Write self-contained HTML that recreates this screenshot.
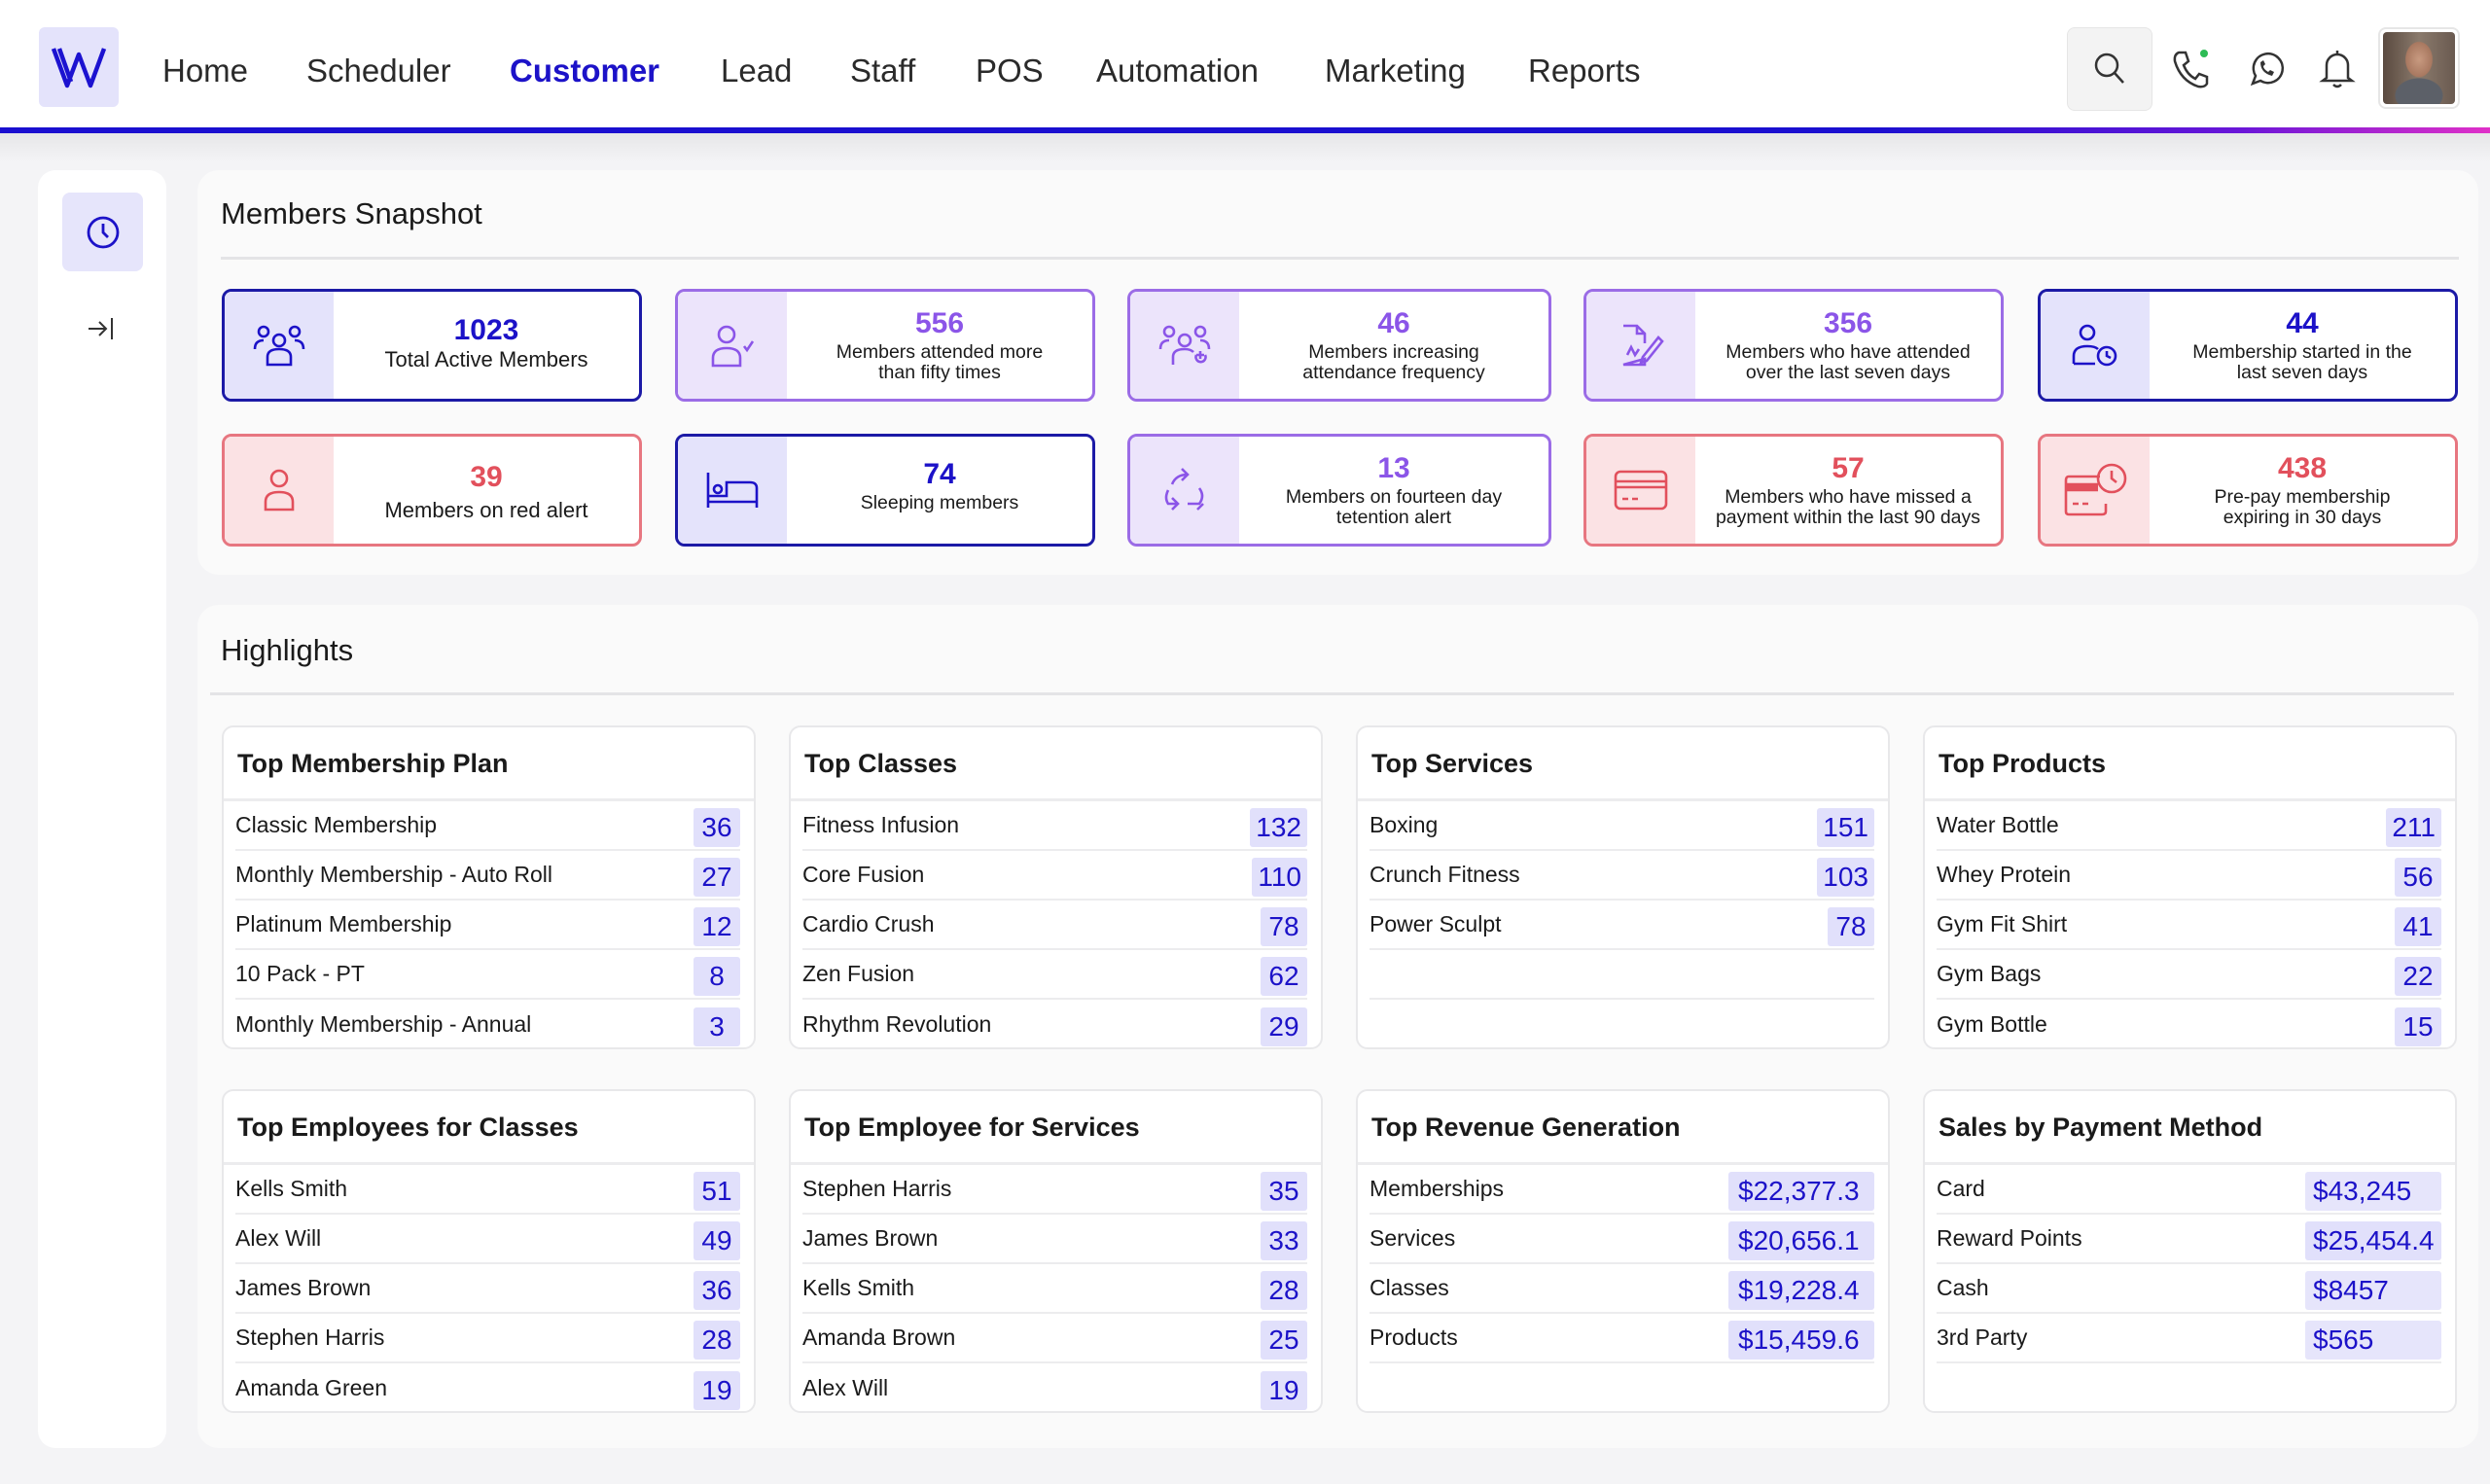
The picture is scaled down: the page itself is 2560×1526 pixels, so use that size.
<!DOCTYPE html>
<html><head><meta charset="utf-8">
<style>
*{box-sizing:border-box;margin:0;padding:0}
body{width:2560px;height:1526px;background:#f4f4f6;font-family:"Liberation Sans",sans-serif;color:#1a1a1a;position:relative;overflow:hidden}
.abs{position:absolute}
.nav{position:absolute;left:0;top:0;width:2560px;height:132px;background:#fff}
.line{position:absolute;left:0;top:131px;width:2560px;height:6px;background:linear-gradient(90deg,#1a0fd0 0%,#1a0fd0 75%,#6a16d8 90%,#e030c8 100%)}
.shadow{position:absolute;left:0;top:137px;width:2560px;height:30px;background:linear-gradient(#e6e6e8,#f4f4f6)}
.nv{position:absolute;top:54px;font-size:33px;color:#2a2a2a}
.panel{position:absolute;background:#fafafa;border-radius:22px}
.card{position:absolute;width:432px;height:116px;border:3px solid;border-radius:10px;background:#fff;overflow:hidden}
.card .ic{position:absolute;left:0;top:0;width:112px;height:100%;display:flex;align-items:center;justify-content:center}
.card .tx{position:absolute;left:112px;right:0;top:0;bottom:0;display:flex;flex-direction:column;align-items:center;justify-content:center;text-align:center;line-height:21px;font-size:19.5px;color:#1a1a1a}
.card .tx b{font-size:30px;line-height:34px;margin-bottom:2px}
.blue{border-color:#1c1aa6}.blue .ic{background:#e4e3fb}.blue b{color:#1c12c8}
.pur{border-color:#9b6ce6}.pur .ic{background:#ece4fb}.pur b{color:#8b55e8}
.red{border-color:#e77680}.red .ic{background:#fbe2e4}.red b{color:#e2505c}
.tc{position:absolute;width:549px;height:333px;background:#fff;border:2px solid #e8e8ea;border-radius:12px}
.tc h3{height:76px;border-bottom:3px solid #ececee;font-size:27px;font-weight:bold;padding:22px 0 0 14px;color:#1a1a1a}
.row{height:51px;margin:0 14px 0 12px;border-bottom:2px solid #ececee;display:flex;align-items:center;justify-content:space-between;font-size:23px;color:#1a1a1a}
.row:last-child{border-bottom:none}
.bd{background:#e1e0fb;color:#1c12c8;font-size:28px;height:40px;min-width:48px;padding:0 6px;border-radius:3px;display:flex;align-items:center;justify-content:center;margin-top:4px}
.bd.m{width:150px;justify-content:flex-start;padding-left:10px}
.bd.p{width:140px;justify-content:flex-start;padding-left:8px}
.bd.p2{background:#e6e5fb}
svg{display:block}
</style></head><body>
<div class="nav"></div>
<div class="line"></div>
<div class="shadow"></div>
<div class="abs" style="left:40px;top:28px;width:82px;height:82px;background:#e4e3fb;border-radius:6px;display:flex;align-items:center;justify-content:center">
<svg width="60" height="50" viewBox="0 0 60 50"><path d="M4 6 L18 44 L30 12 L42 44 L56 6 M10 6 L22 40" stroke="#1c12d0" stroke-width="4.5" fill="none" stroke-linejoin="round"/></svg></div>
<div class="nv" style="left:167px">Home</div>
<div class="nv" style="left:315px">Scheduler</div>
<div class="nv" style="left:524px;color:#1c12c8;font-weight:bold">Customer</div>
<div class="nv" style="left:741px">Lead</div>
<div class="nv" style="left:874px">Staff</div>
<div class="nv" style="left:1003px">POS</div>
<div class="nv" style="left:1127px">Automation</div>
<div class="nv" style="left:1362px">Marketing</div>
<div class="nv" style="left:1571px">Reports</div>
<div class="abs" style="left:2125px;top:28px;width:88px;height:86px;background:#f3f3f3;border:1px solid #e6e6e6;border-radius:8px;display:flex;align-items:center;justify-content:center">
<svg width="40" height="40" viewBox="0 0 40 40"><circle cx="17" cy="16" r="11" stroke="#333" stroke-width="2.5" fill="none"/><path d="M25 24 L34 34" stroke="#333" stroke-width="2.5"/></svg></div>
<svg class="abs" style="left:2232px;top:50px" width="40" height="42" viewBox="0 0 40 42"><path d="M8 4 L15 4 L18 13 L13 17 Q17 27 25 31 L29 26 L37 29 L37 36 Q35 40 28 39 Q10 33 4 13 Q3 6 8 4Z" stroke="#333" stroke-width="2.5" fill="none"/><circle cx="34" cy="5" r="4" fill="#2dbb55"/></svg>
<svg class="abs" style="left:2310px;top:51px" width="40" height="40" viewBox="0 0 40 40"><path d="M6 35 L9 27 A15 15 0 1 1 14 32 Z" stroke="#333" stroke-width="2.5" fill="none"/><path d="M14 13 Q14 24 26 27 L28 23 L24 21 L22 23 Q17 20 17 17 L19 15 L17 11 Z" fill="#333"/></svg>
<svg class="abs" style="left:2383px;top:48px" width="40" height="44" viewBox="0 0 40 44"><path d="M9 32 L9 19 A11 11 0 0 1 31 19 L31 32 L35 35 L5 35 Z" stroke="#333" stroke-width="2.5" fill="none"/><path d="M16 39 Q20 43 24 39 M20 4 L20 8" stroke="#333" stroke-width="2.5" fill="none"/></svg>
<div class="abs" style="left:2445px;top:28px;width:84px;height:84px;border:2px solid #e6e6e6;border-radius:8px;overflow:hidden;background:#fff;padding:3px">
<div style="width:100%;height:100%;border-radius:4px;background:radial-gradient(ellipse 26% 34% at 50% 38%,#c89a80 0%,#a87860 70%,transparent 74%),radial-gradient(ellipse 36% 26% at 50% 88%,#5c6068 0%,#5c6068 90%,transparent 94%),linear-gradient(90deg,#5a4a40 0%,#8a7a6c 50%,#6a5a50 100%)"></div></div>

<!-- sidebar -->
<div class="abs" style="left:39px;top:175px;width:132px;height:1314px;background:#fff;border-radius:18px"></div>
<div class="abs" style="left:64px;top:198px;width:83px;height:81px;background:#e6e5fb;border-radius:8px;display:flex;align-items:center;justify-content:center">
<svg width="36" height="36" viewBox="0 0 36 36"><circle cx="18" cy="18" r="15" stroke="#1c12c8" stroke-width="2.8" fill="none"/><path d="M18 9 L18 18 L23 23" stroke="#1c12c8" stroke-width="2.8" fill="none"/></svg></div>
<svg class="abs" style="left:89px;top:325px" width="30" height="26" viewBox="0 0 30 26"><path d="M2 13 L20 13 M13 6 L20 13 L13 20 M26 2 L26 24" stroke="#333" stroke-width="2" fill="none"/></svg>

<!-- snapshot -->
<div class="panel" style="left:203px;top:175px;width:2345px;height:416px"></div>
<div class="abs" style="left:227px;top:202px;font-size:31px">Members Snapshot</div>
<div class="abs" style="left:227px;top:264px;width:2301px;height:3px;background:#e4e4e6"></div>

<div class="card blue" style="left:228px;top:297px"><div class="ic"><svg width="56" height="48" viewBox="0 0 56 48"><g stroke="#1c12c8" stroke-width="2.6" fill="none"><circle cx="12" cy="10" r="5"/><circle cx="44" cy="10" r="5"/><circle cx="28" cy="19" r="6"/><path d="M3 28 Q3 19 12 19 M53 28 Q53 19 44 19 M16 44 L16 36 Q16 28 28 28 Q40 28 40 36 L40 44 Z"/></g></svg></div><div class="tx" style="padding-bottom:8px"><b>1023</b><span style="font-size:22px">Total Active Members</span></div></div>
<div class="card pur" style="left:694px;top:297px"><div class="ic"><svg width="56" height="50" viewBox="0 0 56 50"><g stroke="#8b55e8" stroke-width="2.6" fill="none"><circle cx="22" cy="14" r="8"/><path d="M8 46 L8 38 Q8 28 22 28 Q36 28 36 38 L36 46 Z M40 26 L43 30 L49 21"/></g></svg></div><div class="tx"><b>556</b>Members attended more<br>than fifty times</div></div>
<div class="card pur" style="left:1159px;top:297px;width:436px"><div class="ic"><svg width="56" height="48" viewBox="0 0 56 48"><g stroke="#8b55e8" stroke-width="2.6" fill="none"><circle cx="12" cy="10" r="5"/><circle cx="44" cy="10" r="5"/><circle cx="28" cy="19" r="6"/><path d="M3 28 Q3 19 12 19 M53 28 Q53 19 44 19 M16 44 L16 36 Q16 28 28 28 Q34 28 37 31 M40 34 L48 34 M44 30 L44 38 M40 34 A5 5 0 1 0 49 34"/></g></svg></div><div class="tx"><b>46</b>Members increasing<br>attendance frequency</div></div>
<div class="card pur" style="left:1628px;top:297px"><div class="ic"><svg width="52" height="52" viewBox="0 0 52 52"><g stroke="#8b55e8" stroke-width="2.6" fill="none"><path d="M8 6 L22 6 L30 14 L30 24 M30 40 L30 46 L8 46 Z M22 6 L22 14 L30 14 M12 36 L16 28 L20 36 L24 30"/><path d="M28 38 L44 18 L48 22 L32 42 L26 44 Z"/></g></svg></div><div class="tx"><b>356</b>Members who have attended<br>over the last seven days</div></div>
<div class="card blue" style="left:2095px;top:297px"><div class="ic"><svg width="56" height="50" viewBox="0 0 56 50"><g stroke="#1c12c8" stroke-width="2.6" fill="none"><circle cx="20" cy="12" r="7"/><path d="M6 44 L6 36 Q6 26 20 26 Q28 26 31 29 M6 44 L28 44"/><circle cx="40" cy="36" r="9"/><path d="M40 31 L40 36 L44 38"/></g></svg></div><div class="tx"><b>44</b>Membership started in the<br>last seven days</div></div>

<div class="card red" style="left:228px;top:446px"><div class="ic"><svg width="44" height="52" viewBox="0 0 44 52"><g stroke="#e2505c" stroke-width="2.6" fill="none"><circle cx="22" cy="14" r="8"/><path d="M8 46 L8 38 Q8 28 22 28 Q36 28 36 38 L36 46 Z"/></g></svg></div><div class="tx"><b style="margin-bottom:6px">39</b><span style="font-size:22px">Members on red alert</span></div></div>
<div class="card blue" style="left:694px;top:446px"><div class="ic"><svg width="56" height="44" viewBox="0 0 56 44"><g stroke="#1c12c8" stroke-width="2.6" fill="none"><path d="M3 4 L3 40 M3 34 L53 34 M53 40 L53 20 Q53 14 46 14 L22 14 L22 28 L3 28"/><circle cx="13" cy="21" r="4"/></g></svg></div><div class="tx" style="padding-bottom:10px"><b>74</b>Sleeping members</div></div>
<div class="card pur" style="left:1159px;top:446px;width:436px"><div class="ic"><svg width="50" height="52" viewBox="0 0 50 52"><g stroke="#8b55e8" stroke-width="2.6" fill="none"><path d="M22 4 L28 10 L22 16 M28 10 Q16 10 12 20 M8 26 Q4 34 8 40 L18 40 M12 34 L18 40 L12 46 M40 24 Q46 32 40 40 L28 40 M38 46 L44 40"/></g></svg></div><div class="tx"><b>13</b>Members on fourteen day<br>tetention alert</div></div>
<div class="card red" style="left:1628px;top:446px"><div class="ic"><svg width="58" height="46" viewBox="0 0 58 46"><g stroke="#e2505c" stroke-width="2.6" fill="none"><rect x="3" y="4" width="52" height="38" rx="5"/><path d="M3 14 L55 14 M3 20 L55 20 M10 32 L16 32 M20 32 L26 32"/></g></svg></div><div class="tx"><b>57</b>Members who have missed a<br>payment within the last 90 days</div></div>
<div class="card red" style="left:2095px;top:446px"><div class="ic"><svg width="66" height="60" viewBox="0 0 66 60"><g stroke="#e2505c" stroke-width="2.6" fill="none"><path d="M38 16 L6 16 Q3 16 3 20 L3 52 Q3 55 6 55 L40 55 Q44 55 44 52 L44 44"/><path d="M3 24 L36 24 M3 30 L36 30 M10 44 L16 44 M20 44 L26 44"/><circle cx="50" cy="18" r="14"/><path d="M50 10 L50 18 L55 22"/></g><rect x="4" y="25" width="32" height="4" fill="#e2505c"/></svg></div><div class="tx"><b>438</b>Pre-pay membership<br>expiring in 30 days</div></div>

<!-- highlights -->
<div class="panel" style="left:203px;top:622px;width:2345px;height:867px"></div>
<div class="abs" style="left:227px;top:651px;font-size:31px">Highlights</div>
<div class="abs" style="left:216px;top:712px;width:2307px;height:3px;background:#e4e4e6"></div>

<div class="tc" style="left:228px;top:746px"><h3>Top Membership Plan</h3>
<div class="row">Classic Membership<span class="bd">36</span></div>
<div class="row">Monthly Membership - Auto Roll<span class="bd">27</span></div>
<div class="row">Platinum Membership<span class="bd">12</span></div>
<div class="row">10 Pack - PT<span class="bd">8</span></div>
<div class="row">Monthly Membership - Annual<span class="bd">3</span></div></div>

<div class="tc" style="left:811px;top:746px"><h3>Top Classes</h3>
<div class="row">Fitness Infusion<span class="bd">132</span></div>
<div class="row">Core Fusion<span class="bd">110</span></div>
<div class="row">Cardio Crush<span class="bd">78</span></div>
<div class="row">Zen Fusion<span class="bd">62</span></div>
<div class="row">Rhythm Revolution<span class="bd">29</span></div></div>

<div class="tc" style="left:1394px;top:746px"><h3>Top Services</h3>
<div class="row">Boxing<span class="bd">151</span></div>
<div class="row">Crunch Fitness<span class="bd">103</span></div>
<div class="row">Power Sculpt<span class="bd">78</span></div>
<div class="row" style="border-bottom:2px solid #ececee"></div>
<div class="row"></div></div>

<div class="tc" style="left:1977px;top:746px"><h3>Top Products</h3>
<div class="row">Water Bottle<span class="bd">211</span></div>
<div class="row">Whey Protein<span class="bd">56</span></div>
<div class="row">Gym Fit Shirt<span class="bd">41</span></div>
<div class="row">Gym Bags<span class="bd">22</span></div>
<div class="row">Gym Bottle<span class="bd">15</span></div></div>

<div class="tc" style="left:228px;top:1120px"><h3>Top Employees for Classes</h3>
<div class="row">Kells Smith<span class="bd">51</span></div>
<div class="row">Alex Will<span class="bd">49</span></div>
<div class="row">James Brown<span class="bd">36</span></div>
<div class="row">Stephen Harris<span class="bd">28</span></div>
<div class="row">Amanda Green<span class="bd">19</span></div></div>

<div class="tc" style="left:811px;top:1120px"><h3>Top Employee for Services</h3>
<div class="row">Stephen Harris<span class="bd">35</span></div>
<div class="row">James Brown<span class="bd">33</span></div>
<div class="row">Kells Smith<span class="bd">28</span></div>
<div class="row">Amanda Brown<span class="bd">25</span></div>
<div class="row">Alex Will<span class="bd">19</span></div></div>

<div class="tc" style="left:1394px;top:1120px"><h3>Top Revenue Generation</h3>
<div class="row">Memberships<span class="bd m">$22,377.3</span></div>
<div class="row">Services<span class="bd m">$20,656.1</span></div>
<div class="row">Classes<span class="bd m">$19,228.4</span></div>
<div class="row" style="border-bottom:2px solid #ececee">Products<span class="bd m">$15,459.6</span></div>
<div class="row"></div></div>

<div class="tc" style="left:1977px;top:1120px"><h3>Sales by Payment Method</h3>
<div class="row">Card<span class="bd p p2">$43,245</span></div>
<div class="row">Reward Points<span class="bd p">$25,454.4</span></div>
<div class="row">Cash<span class="bd p p2">$8457</span></div>
<div class="row" style="border-bottom:2px solid #ececee">3rd Party<span class="bd p p2">$565</span></div>
<div class="row"></div></div>
</body></html>
